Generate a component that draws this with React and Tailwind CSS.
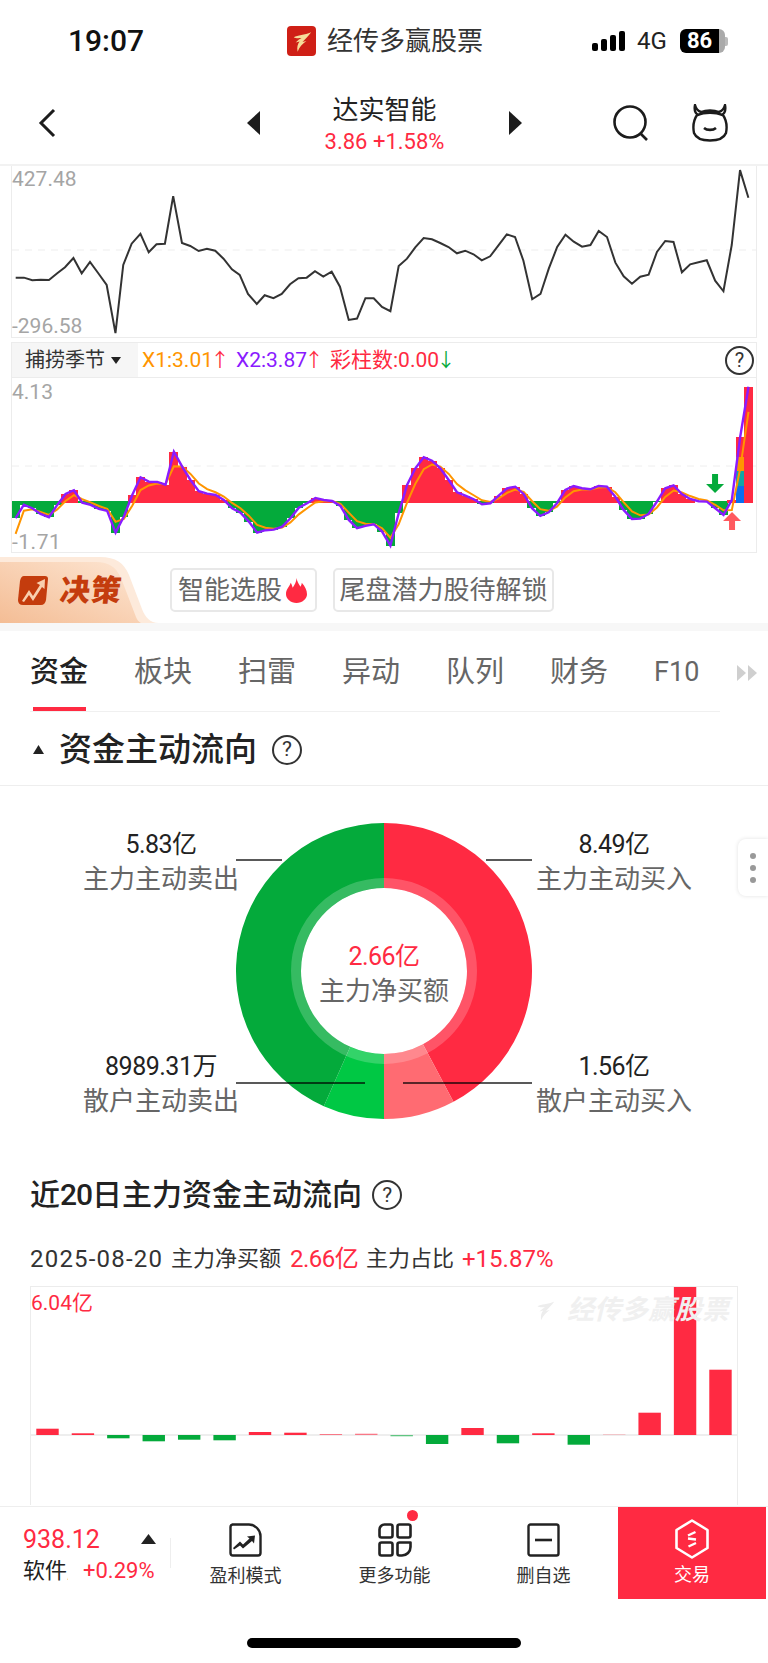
import React from 'react';

const RED = '#ff2a42';
const GREEN = '#04aa3b';

// line chart, read off the reference
const LINE = [[32,353],[49,353],[66,361],[83,359],[100,360],[117,340],[133,322],[150,294],[167,340],[184,306],[201,340],[218,375],[236,520],[252,315],[269,251],[287,221],[304,277],[320,253],[337,251],[354,108],[372,249],[389,258],[406,273],[423,266],[440,272],[457,296],[474,328],[490,345],[507,402],[525,432],[541,406],[559,415],[576,402],[593,373],[610,355],[627,353],[644,334],[661,350],[678,335],[695,380],[713,480],[730,476],[747,415],[764,415],[781,441],[798,454],[815,318],[832,296],[849,262],[866,234],[883,238],[900,249],[917,261],[934,280],[951,272],[968,283],[985,301],[1002,289],[1019,256],[1036,223],[1053,231],[1070,302],[1088,418],[1105,402],[1122,326],[1139,261],[1156,224],[1173,245],[1190,260],[1207,255],[1224,213],[1241,231],[1258,308],[1275,349],[1292,371],[1309,350],[1326,344],[1343,276],[1360,243],[1377,246],[1394,337],[1411,313],[1428,307],[1445,301],[1462,362],[1479,394],[1496,255],[1513,30],[1530,113]];

const MACD = [535,494,505,522,532,495,462,451,488,495,507,513,578,530,465,412,425,426,434,335,380,420,454,461,465,480,505,518,545,578,571,569,560,535,503,490,474,480,483,498,540,565,558,553,575,617,520,435,385,352,362,385,420,457,467,478,493,490,467,445,440,462,505,528,517,490,450,438,445,448,438,440,470,510,537,536,522,485,445,436,462,477,484,485,505,525,480,290,140];

const BARS = [6.3,1.7,-3.3,-6.3,-4.7,-5.3,3,2.3,1,1.3,-1.3,-9,7,-8.3,1.7,-9.7,0.7,22.3,149,65.3];

const macdX = (i) => 15.6 + 8.34 * i;
const macdY = (v) => 340 + v / 3;

function orangeLine() {
  const out = [582, 512];
  for (let i = 2; i < MACD.length; i++) {
    out.push(out[i - 1] + 0.55 * (MACD[i] - out[i - 1]));
  }
  out[86] = 510;
  out[87] = 385;
  out[88] = 215;
  return out;
}

function arc(start, end, outer = 148, inner = 83) {
  const cx = 384;
  const cy = 972;
  const pt = (deg, r) => {
    const a = (deg * Math.PI) / 180;
    return `${cx + r * Math.sin(a)} ${cy - r * Math.cos(a)}`;
  };
  const large = end - start > 180 ? 1 : 0;
  return `M${pt(start, outer)} A${outer} ${outer} 0 ${large} 1 ${pt(end, outer)} L${pt(end, inner)} A${inner} ${inner} 0 ${large} 0 ${pt(start, inner)} Z`;
}

function Help({ size = 'w-[30px] h-[30px] text-[21px]' }) {
  return (
    <span className={`${size} rounded-full border-2 border-[#333] text-[#333] flex items-center justify-center leading-none`}>?</span>
  );
}

function LogoMark({ color }) {
  return (
    <svg viewBox="0 0 30 30" className="w-full h-full">
      <path d="M7 11 C11 9 18 9 25 6 C22 10 19 13 16 16 L20 15 C16 18 13 21 11 26 C10 22 11 18 13 15.5 L9 16.5 C11 14.5 13 13 15 12 C12 12 9 12.5 7 11 Z" fill={color} />
    </svg>
  );
}

function StatusBar() {
  return (
    <div className="h-[82px] flex items-center shrink-0">
      <div className="w-[287px] pl-[68px] text-[30px] font-medium text-[#111] leading-none">19:07</div>
      <div className="w-[305px] flex items-center gap-[11px]">
        <div className="w-[29px] h-[30px] rounded-[4px] bg-[#cf1f16]">
          <LogoMark color="#f6dc9a" />
        </div>
        <span className="text-[26px] text-[#333] leading-none">经传多赢股票</span>
      </div>
      <div className="flex items-center">
        <div className="w-[34px] h-[20px] flex items-end gap-[3px]">
          <span className="w-[6px] h-[8px] bg-black rounded-[2px]" />
          <span className="w-[6px] h-[12px] bg-black rounded-[2px]" />
          <span className="w-[6px] h-[16px] bg-black rounded-[2px]" />
          <span className="w-[6px] h-[20px] bg-black rounded-[2px]" />
        </div>
        <span className="ml-[11px] w-[32px] text-[24px] text-[#222] leading-none">4G</span>
        <div className="ml-[11px] flex items-center">
          <div className="w-[45px] h-[24px] rounded-[6px] bg-[linear-gradient(90deg,#000_0,#000_86%,#aaa_86%,#aaa_100%)] flex items-center pl-[7px] text-white text-[22px] font-bold leading-none">86</div>
          <span className="w-[3px] h-[9px] bg-[#bbb] rounded-r-[2px]" />
        </div>
      </div>
    </div>
  );
}

function NavBar() {
  return (
    <div className="h-[82px] flex items-center shrink-0 relative">
      <svg viewBox="0 0 18 30" className="w-[18px] h-[30px] ml-[38px]">
        <path d="M16 2 L3 15 L16 28" fill="none" stroke="#1c1c1c" strokeWidth="3" />
      </svg>
      <svg viewBox="0 0 14 24" className="w-[14px] h-[24px] ml-[191px]">
        <path d="M13 0 V24 L0 12 Z" fill="#1c1c1c" />
      </svg>
      <div className="w-[247px] pt-[2px] flex flex-col items-center">
        <span className="text-[26px] text-[#222] leading-[34px]">达实智能</span>
        <span className="mt-[2px] text-[22px] leading-[26px]" style={{ color: RED }}>3.86 +1.58%</span>
      </div>
      <svg viewBox="0 0 14 24" className="w-[14px] h-[24px]">
        <path d="M1 0 V24 L14 12 Z" fill="#1c1c1c" />
      </svg>
      <svg viewBox="0 0 36 36" className="w-[36px] h-[36px] ml-[91px]">
        <circle cx="17" cy="17" r="15.5" fill="none" stroke="#1c1c1c" strokeWidth="2.6" />
        <path d="M27 28 L34 35" stroke="#1c1c1c" strokeWidth="2.6" />
      </svg>
      <svg viewBox="0 0 36 38" className="w-[36px] h-[38px] ml-[43px]">
        <path d="M3 1 C2 6 3 9 6 11 C12 8 24 8 30 11 C33 9 34 6 33 1 C32 5 30 7 27 8 C22 6 14 6 9 8 C6 7 4 5 3 1 Z M5 11 C1 17 1 24 2 29 C4 34 10 36.5 18 36.5 C26 36.5 32 34 34 29 C35 24 35 17 31 11" fill="none" stroke="#1c1c1c" strokeWidth="2.4" strokeLinejoin="round" />
        <path d="M12 24 C15 26.5 21 26.5 24 24" fill="none" stroke="#1c1c1c" strokeWidth="2.6" />
      </svg>
    </div>
  );
}

function LineChart() {
  const pts = LINE.map(([x, y]) => `${(x / 2.0417).toFixed(1)},${(160 + y / 3).toFixed(1)}`).join(' ');
  return (
    <div className="relative mx-[11px] h-[172px] border-x border-b border-[#ececec]">
      <svg viewBox="12 166 745 171" className="w-full h-full block">
        <line x1="12" x2="757" y1="250" y2="250" stroke="#ededed" strokeWidth="1" strokeDasharray="7 6" />
        <polyline points={pts} fill="none" stroke="#333" strokeWidth="2" />
      </svg>
      <span className="absolute left-0 top-[1px] text-[21px] leading-[24px] text-[#a5a5a5]">427.48</span>
      <span className="absolute left-0 bottom-[-1px] text-[21px] leading-[24px] text-[#a5a5a5]">-296.58</span>
    </div>
  );
}

function MacdChart() {
  const orange = orangeLine();
  const purple = MACD.map((v, i) => `${macdX(i).toFixed(1)},${macdY(v).toFixed(1)}`).join(' ');
  const orangePts = orange.map((v, i) => `${macdX(i).toFixed(1)},${macdY(v).toFixed(1)}`).join(' ');
  return (
    <div className="relative mx-[11px] h-[175px] border-x border-b border-[#ececec]">
      <svg viewBox="12 378 745 174" className="w-full h-full block">
        <line x1="12" x2="757" y1="466" y2="466" stroke="#eeeeee" strokeWidth="1" strokeDasharray="7 6" />
        <g shapeRendering="crispEdges">
          {MACD.map((v, i) =>
            v < 484 ? (
              <rect key={i} x={macdX(i) - 4.6} y={macdY(v)} width="9.2" height={macdY(488) - macdY(v)} fill={RED} />
            ) : (
              <rect key={i} x={macdX(i) - 4.6} y={macdY(484)} width="9.2" height={macdY(v) - macdY(484)} fill={GREEN} />
            )
          )}
          <rect x={macdX(87) - 4.2} y="456.7" width="8.4" height="14" fill="#ff9500" />
          <rect x={macdX(87) - 4.2} y="470.7" width="8.4" height="15.3" fill="#12a5a5" />
          <rect x={macdX(87) - 4.2} y="486" width="8.4" height="16.7" fill="#0b6ef0" />
        </g>
        <polyline points={orangePts} fill="none" stroke="#ff9500" strokeWidth="2" />
        <polyline points={purple} fill="none" stroke="#8a1bff" strokeWidth="2.4" />
        <path d="M713 474 H719 V484 H725 L716 493 L707 484 H713 Z" fill={GREEN} />
        <path d="M730 530 H736 V521 H742 L733 512 L724 521 H730 Z" fill="#ff5a5f" />
      </svg>
      <span className="absolute left-0 top-[2px] text-[21px] leading-[24px] text-[#a5a5a5]">4.13</span>
      <span className="absolute left-0 bottom-[-2px] text-[21px] leading-[24px] text-[#a5a5a5] tracking-[0.5px]">-1.71</span>
    </div>
  );
}

function Arrow({ color, children }) {
  return (
    <span className="inline-flex w-[14px] justify-center text-[19px]" style={{ color }}>{children}</span>
  );
}

function IndicatorBar() {
  return (
    <div className="mx-[11px] mt-[4px] h-[36px] border-x border-y border-[#ececec] flex items-center">
      <div className="w-[126px] h-full bg-[#f6f6f6] flex items-center pl-[13px] gap-[6px]">
        <span className="text-[20px] text-[#333] leading-none whitespace-nowrap">捕捞季节</span>
        <svg viewBox="0 0 10 7" className="w-[10px] h-[7px]"><path d="M0 0 H10 L5 7 Z" fill="#222" /></svg>
      </div>
      <span className="ml-[4px] w-[94px] flex items-center text-[21px] leading-none text-[#ff9500] whitespace-nowrap">X1:3.01<Arrow color={RED}>↑</Arrow></span>
      <span className="w-[94px] flex items-center text-[21px] leading-none text-[#8a1bff] whitespace-nowrap">X2:3.87<Arrow color={RED}>↑</Arrow></span>
      <span className="flex items-center text-[21px] leading-none whitespace-nowrap" style={{ color: RED }}>彩柱数:0.00<Arrow color={GREEN}>↓</Arrow></span>
      <div className="ml-auto mr-[2px]">
        <Help size="w-[29px] h-[29px] text-[20px]" />
      </div>
    </div>
  );
}

function DecisionRow() {
  return (
    <div className="mt-[4px] h-[66px] flex items-center">
      <div className="relative w-[159px] h-[66px]">
        <svg viewBox="0 0 159 66" className="absolute inset-0 w-full h-full">
          <defs>
            <linearGradient id="dec" x1="0" y1="1" x2="1" y2="0">
              <stop offset="0" stopColor="#f4bd95" />
              <stop offset="1" stopColor="#fde6d3" />
            </linearGradient>
          </defs>
          <path d="M0 0 H100 C116 0 124 6 129 18 L142 52 C145 60 150 66 159 66 H0 Z" fill="#fdeadb" />
          <path d="M0 5 H96 C109 5 116 10 121 21 L136 60 C137 63 139 65 141 66 H0 Z" fill="url(#dec)" />
        </svg>
        <div className="absolute inset-0 flex items-center pl-[18px] pt-[1px] gap-[12px]">
          <svg viewBox="0 0 30 29" className="w-[30px] h-[29px]">
            <path d="M6 0 H27 Q30 0 30 3 L28 24 Q27 29 23 29 H5 Q0 29 0 24 L2 5 Q3 0 6 0 Z" fill="#c43c0d" />
            <path d="M4 25 L11 14 L15 20 L22 9 L18.5 7 L27 3 L26.5 13 L24 11 L15 25 L11 19 L6 26 Z" fill="#f8cfae" />
          </svg>
          <span className="inline-block -skew-x-6 text-[30px] font-black text-[#c43c0d] leading-none tracking-[1px]">决策</span>
        </div>
      </div>
      <div className="ml-[11px] w-[147px] h-[44px] bg-white rounded-[5px] border-2 border-[#e8e8e8] flex items-center pl-[6px] gap-[4px]">
        <span className="text-[26px] text-[#666] leading-none whitespace-nowrap">智能选股</span>
        <svg viewBox="0 0 22 26" className="w-[21px] h-[25px]">
          <path d="M11 0 C12 5 14 7 15 9 C16 8 16.5 6.5 16.5 5 C20 9 22 13 22 17 C22 22 17 26 11 26 C5 26 0 22 0 17 C0 12 3 10 5 5 C6 7 6.5 8.5 7 10 C9 7 11 4 11 0 Z" fill={RED} />
        </svg>
      </div>
      <div className="ml-[16px] w-[221px] h-[44px] bg-white rounded-[5px] border-2 border-[#e8e8e8] flex items-center justify-center">
        <span className="text-[26px] text-[#666] leading-none whitespace-nowrap">尾盘潜力股待解锁</span>
      </div>
    </div>
  );
}

function Tabs() {
  const tabs = ['板块', '扫雷', '异动', '队列', '财务'];
  return (
    <div className="relative ml-[30px] w-[690px] h-[81px] pt-[3px] border-b border-[#f0f0f0] flex items-center gap-[46px]">
      <div className="relative h-full flex items-center text-[29px] text-[#222] font-medium">
        资金
        <span className="absolute left-[3px] bottom-0 w-[53px] h-[4px]" style={{ background: RED }} />
      </div>
      {tabs.map((t) => (
        <span key={t} className="text-[29px] text-[#666] leading-none whitespace-nowrap">{t}</span>
      ))}
      <span className="text-[27px] text-[#666] leading-none whitespace-nowrap">F10</span>
      <svg viewBox="0 0 20 16" className="absolute left-[707px] top-[34px] w-[20px] h-[16px]">
        <path d="M0 0 L9 8 L0 16 Z M11 0 L20 8 L11 16 Z" fill="#cfcfcf" />
      </svg>
    </div>
  );
}

function Label({ value, name }) {
  return (
    <div className="w-[152px] flex flex-col items-center whitespace-nowrap">
      <span className="text-[25px] leading-[35px] tracking-[-0.5px] text-[#222]">{value}</span>
      <span className="text-[26px] leading-[35px] text-[#666]">{name}</span>
    </div>
  );
}

function Donut() {
  return (
    <div className="relative mt-[37px] flex h-[296px]">
      <div className="w-[236px] pl-[85px] mt-[1px] flex flex-col justify-between pt-[3px]">
        <Label value="5.83亿" name="主力主动卖出" />
        <Label value="8989.31万" name="散户主动卖出" />
      </div>
      <div className="relative w-[296px] h-[296px]">
        <svg viewBox="236 824 296 296" className="w-full h-full block">
          <path d={arc(0, 152)} fill={RED} />
          <path d={arc(152, 180)} fill="#ff6b72" />
          <path d={arc(180, 204)} fill="#00c844" />
          <path d={arc(204, 360)} fill={GREEN} />
          <circle cx="384" cy="972" r="88" fill="none" stroke="#fff" strokeOpacity="0.2" strokeWidth="10" />
          <g stroke="#000" strokeOpacity="0.65" strokeWidth="2">
            <line x1="236" x2="282" y1="861" y2="861" />
            <line x1="486" x2="532" y1="861" y2="861" />
            <line x1="236" x2="365" y1="1084" y2="1084" />
            <line x1="403" x2="532" y1="1084" y2="1084" />
          </g>
        </svg>
        <div className="absolute inset-0 flex flex-col items-center justify-center pt-[6px]">
          <span className="text-[25px] leading-[35px] tracking-[-0.5px]" style={{ color: RED }}>2.66亿</span>
          <span className="text-[26px] leading-[35px] text-[#666]">主力净买额</span>
        </div>
      </div>
      <div className="ml-[6px] mt-[1px] flex flex-col justify-between pt-[3px]">
        <Label value="8.49亿" name="主力主动买入" />
        <Label value="1.56亿" name="散户主动买入" />
      </div>
      <div className="absolute right-0 top-[16px] w-[30px] h-[57px] bg-white rounded-l-[8px] shadow-[0_0_4px_rgba(0,0,0,0.12)] flex flex-col items-center justify-center gap-[6px]">
        <span className="w-[6px] h-[6px] rounded-full bg-[#999]" />
        <span className="w-[6px] h-[6px] rounded-full bg-[#999]" />
        <span className="w-[6px] h-[6px] rounded-full bg-[#999]" />
      </div>
    </div>
  );
}

function BarChart() {
  return (
    <div className="relative mt-[11px] ml-[30px] w-[708px] h-[219px] border-x border-t border-[#ececec]">
      <svg viewBox="31 1288 706 218" className="w-full h-full block">
        <rect x="31" y="1435" width="706" height="2" fill="#eeeeee" />
        {BARS.map((v, i) => {
          const x = 47.5 + 35.42 * i - 11.2;
          const op = Math.abs(v) < 1 ? 0.3 : Math.abs(v) < 1.4 ? 0.6 : 1;
          return v > 0 ? (
            <rect key={i} x={x} y={1436 - v} width="22.4" height={v} fill={RED} opacity={op} />
          ) : (
            <rect key={i} x={x} y={1436} width="22.4" height={-v} fill={GREEN} opacity={op} />
          );
        })}
      </svg>
      <span className="absolute left-0 top-[3px] text-[21px] leading-[26px]" style={{ color: RED }}>6.04亿</span>
      <div className="absolute left-[500px] top-[7px] flex items-center gap-[8px]">
        <div className="w-[28px] h-[32px]"><LogoMark color="#ededed" /></div>
        <span className="text-[27px] font-bold italic text-[#f0f0f0] leading-none whitespace-nowrap">经传多赢股票</span>
      </div>
    </div>
  );
}

function NavItem({ label, children }) {
  return (
    <div className="relative w-[149px] flex flex-col items-center pt-[15px]">
      <div className="h-[36px] flex items-center justify-center">{children}</div>
      <span className="mt-[6px] text-[18px] leading-[24px] text-[#333] whitespace-nowrap">{label}</span>
    </div>
  );
}

function BottomNav() {
  return (
    <div className="shrink-0 h-[157px] bg-white border-t border-[#eeeeee]">
      <div className="h-[92px] flex">
        <div className="w-[171px] pl-[23px] pt-[15px] relative">
          <div className="flex items-center h-[34px]">
            <span className="w-[118px] text-[25px] leading-none" style={{ color: RED }}>938.12</span>
            <svg viewBox="0 0 15 10" className="w-[15px] h-[10px]"><path d="M7.5 0 L15 10 H0 Z" fill="#222" /></svg>
          </div>
          <div className="flex items-center h-[30px]">
            <span className="w-[45px] overflow-hidden whitespace-nowrap text-[22px] text-[#222] leading-none">软件服务</span>
            <span className="ml-[15px] text-[22px] leading-none whitespace-nowrap" style={{ color: RED }}>+0.29%</span>
          </div>
          <span className="absolute right-0 top-[31px] w-[1px] h-[30px] bg-[#eeeeee]" />
        </div>
        <NavItem label="盈利模式">
          <svg viewBox="0 0 33 34" className="w-[33px] h-[34px]">
            <path d="M3.5 1.5 H20 C26 1.5 31.5 7 31.5 13 V30 A2.5 2.5 0 0 1 29 32.5 H4 A2.5 2.5 0 0 1 1.5 30 V4 A2.5 2.5 0 0 1 3.5 1.5 Z" fill="none" stroke="#222" strokeWidth="2.4" />
            <path d="M4 25 L11 18.5 L14 21.5 L20.5 15.5 L18 13.5 L26 12.5 L25 20.5 L23 18 L14 25.5 L11 22.5 L5 26.5 Z" fill="#222" />
          </svg>
        </NavItem>
        <NavItem label="更多功能">
          <svg viewBox="0 0 34 34" className="w-[34px] h-[34px]">
            <g fill="none" stroke="#222" strokeWidth="2.6" strokeLinejoin="round">
              <path d="M6.5 1.5 H12.5 A2 2 0 0 1 14.5 3.5 V12.5 A2 2 0 0 1 12.5 14.5 H3.5 A2 2 0 0 1 1.5 12.5 V6.5 A5 5 0 0 1 6.5 1.5 Z" />
              <rect x="19.5" y="1.5" width="13" height="13" rx="2" />
              <rect x="1.5" y="19.5" width="13" height="13" rx="2" />
              <path d="M21.5 19.5 H32.5 V24 A8.5 8.5 0 0 1 24 32.5 H21.5 A2 2 0 0 1 19.5 30.5 V21.5 A2 2 0 0 1 21.5 19.5 Z" />
            </g>
          </svg>
          <span className="absolute left-[87px] top-[3px] w-[11px] h-[11px] rounded-full" style={{ background: RED }} />
        </NavItem>
        <NavItem label="删自选">
          <svg viewBox="0 0 33 34" className="w-[33px] h-[34px]">
            <rect x="1.5" y="1.5" width="30" height="31" rx="2" fill="none" stroke="#222" strokeWidth="2.4" />
            <path d="M8 17 H25" stroke="#222" strokeWidth="2.6" />
          </svg>
        </NavItem>
        <div className="w-[148px] h-[92px] flex flex-col items-center pt-[12px]" style={{ background: RED }}>
          <svg viewBox="0 0 36 40" className="w-[36px] h-[40px]">
            <path d="M18 1.5 L33.5 11 V29 L18 38.5 L2.5 29 V11 Z" fill="none" stroke="#fff" strokeWidth="2.6" strokeLinejoin="round" />
            <path d="M14 16.5 L21.5 13 M14 19.5 L22 20.5 M22 24 L14.5 27.5" fill="none" stroke="#fff" strokeWidth="2.4" />
          </svg>
          <span className="mt-[4px] text-[18px] leading-[24px] text-white">交易</span>
        </div>
      </div>
      <div className="mt-[39px] mx-auto w-[274px] h-[10px] rounded-full bg-black" />
    </div>
  );
}

export default function App() {
  return (
    <div className="w-[768px] h-[1663px] bg-white overflow-hidden flex flex-col font-[family-name:Roboto,'Noto_Sans_CJK_SC',sans-serif]">
      <StatusBar />
      <NavBar />
      <div className="flex-1 overflow-hidden border-t-2 border-[#f2f2f2]">
        <LineChart />
        <IndicatorBar />
        <MacdChart />
        <DecisionRow />
        <div className="h-[8px] bg-[#f7f7f7]" />
        <Tabs />
        <div className="h-[74px] pt-[2px] border-b border-[#eeeeee] flex items-center pl-[33px]">
          <svg viewBox="0 0 11 9" className="w-[11px] h-[9px]"><path d="M5.5 0 L11 9 H0 Z" fill="#222" /></svg>
          <span className="ml-[15px] text-[33px] font-medium text-[#222] leading-none">资金主动流向</span>
          <span className="ml-[15px]"><Help /></span>
        </div>
        <Donut />
        <div className="mt-[58px] pl-[30px] h-[36px] flex items-center">
          <span className="text-[30px] font-medium text-[#222] leading-none whitespace-nowrap">近<span className="tracking-[-1px]">20</span>日主力资金主动流向</span>
          <span className="ml-[10px]"><Help /></span>
        </div>
        <div className="mt-[30px] pl-[30px] h-[32px] flex items-center text-[22px] leading-none text-[#333] whitespace-nowrap">
          <span className="w-[141px] text-[24px] tracking-[1.2px]">2025-08-20</span>
          <span className="w-[119px]">主力净买额</span>
          <span className="w-[76px] text-[24px] tracking-[-0.5px]" style={{ color: RED }}>2.66亿</span>
          <span className="w-[96px]">主力占比</span>
          <span className="text-[24px]" style={{ color: RED }}>+15.87%</span>
        </div>
        <BarChart />
      </div>
      <BottomNav />
    </div>
  );
}
